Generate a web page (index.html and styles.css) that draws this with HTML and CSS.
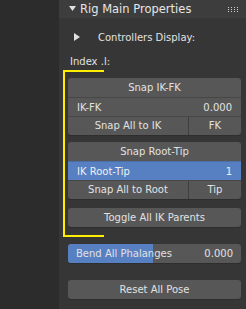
FILE: index.html
```html
<!DOCTYPE html>
<html lang="en">
<head>
    <meta charset="UTF-8">
    <meta name="viewport" content="width=device-width, initial-scale=1.0">
    <title>Rig Main Properties</title>
    <link rel="stylesheet" href="styles.css">
</head>
<body>

    <div class="region">
        <div class="panel">
            <div class="panel-header">
                <svg class="arrow-down" width="7" height="5" viewBox="0 0 7 5"><polygon points="0,0 7,0 3.5,5"/></svg>
                <span class="header-title">Rig Main Properties</span>
                <svg class="grip" width="10" height="6" viewBox="0 0 10 6">
                    <rect x="0" y="0" width="1" height="1"/><rect x="3" y="0" width="1" height="1"/><rect x="6" y="0" width="1" height="1"/><rect x="9" y="0" width="1" height="1"/>
                    <rect x="0" y="2" width="1" height="1"/><rect x="3" y="2" width="1" height="1"/><rect x="6" y="2" width="1" height="1"/><rect x="9" y="2" width="1" height="1"/>
                    <rect x="0" y="4" width="1" height="1"/><rect x="3" y="4" width="1" height="1"/><rect x="6" y="4" width="1" height="1"/><rect x="9" y="4" width="1" height="1"/>
                </svg>
            </div>

            <div class="panel-body">
                <div class="sub-row">
                    <svg class="arrow-right" width="6" height="8" viewBox="0 0 6 8"><polygon points="0,0 6,4 0,8"/></svg>
                    <span>Controllers Display:</span>
                </div>

                <div class="label-row">Index .l:</div>

                <div class="bracket">
                    <div class="group">
                        <div class="btn">Snap IK-FK</div>
                        <div class="field"><span>IK-FK</span><span>0.000</span></div>
                        <div class="split">
                            <div class="btn wide">Snap All to IK</div>
                            <div class="btn narrow">FK</div>
                        </div>
                    </div>

                    <div class="group">
                        <div class="btn">Snap Root-Tip</div>
                        <div class="field blue"><span>IK Root-Tip</span><span>1</span></div>
                        <div class="split">
                            <div class="btn wide">Snap All to Root</div>
                            <div class="btn narrow">Tip</div>
                        </div>
                    </div>

                    <div class="group toggle">
                        <div class="btn">Toggle All IK Parents</div>
                    </div>
                </div>

                <div class="group single slider">
                    <div class="slider-fill" style="width: 49%"></div>
                    <div class="field over"><span>Bend All Phalanges</span><span>0.000</span></div>
                </div>

                <div class="group single reset">
                    <div class="btn">Reset All Pose</div>
                </div>
            </div>
        </div>
    </div>

</body>
</html>
```

FILE: styles.css
```css
body { margin: 0; background-color: #2c2c2c; font-family: "DejaVu Sans", sans-serif; font-size: 10px; color: #e2e2e2; }
.region { width: 246px; height: 309px; display: flex; }
.panel { margin-left: 59px; flex: 1; background-color: #363636; }

.panel-header { height: 18px; background-color: #3d3d3d; display: flex; align-items: center; padding-left: 10px; font-size: 11.5px; color: #e6e6e6; }
.arrow-down { fill: #e0e0e0; flex-shrink: 0; margin-right: 4px; margin-top: -1px; }
.header-title { flex: 1; }
.grip { fill: #d0d0d0; margin-right: 8px; margin-top: 1px; }

.panel-body { padding: 10px 5px 0 4px; }
.sub-row { height: 18px; display: flex; align-items: center; padding-left: 11px; }
.arrow-right { fill: #e0e0e0; flex-shrink: 0; margin-right: 18px; }
.label-row { height: 14px; line-height: 14px; padding-left: 7px; margin-top: 9px; margin-bottom: 1px; }

.bracket { position: relative; border-left: 2px solid #ffee00; padding: 8px 0 10px 3px; }
.bracket::before, .bracket::after { content: ""; position: absolute; left: -2px; width: 41px; height: 2px; background-color: #ffee00; }
.bracket::before { top: 0; }
.bracket::after { bottom: 0; }

.group { border-radius: 3px; overflow: hidden; background-color: #575757; box-shadow: 0 1px 0 #2e2e2e; }
.group + .group { margin-top: 7px; }
.group.toggle { margin-top: 9px; }

.btn { height: 19px; line-height: 19px; text-align: center; }
.field { height: 19px; display: flex; align-items: center; justify-content: space-between; padding: 0 9px; border-top: 1px solid #474747; }
.group > .btn + .field { height: 18px; }
.split { display: flex; border-top: 1px solid #474747; }
.split .btn { height: 18px; line-height: 18px; }
.wide { width: 120px; border-right: 1px solid #404040; }
.narrow { flex: 1; }
.blue { background-color: #5680c2; border-top-color: #4a6fa8; color: #f0f0f0; }

.single { margin-left: 5px; }
.slider { position: relative; margin-top: 7px; height: 19px; }
.slider-fill { position: absolute; left: 0; top: 0; bottom: 0; background-color: #5680c2; }
.field.over { position: relative; border-top: none; padding: 0 8px; }
.group.reset { margin-top: 17px; }
```
